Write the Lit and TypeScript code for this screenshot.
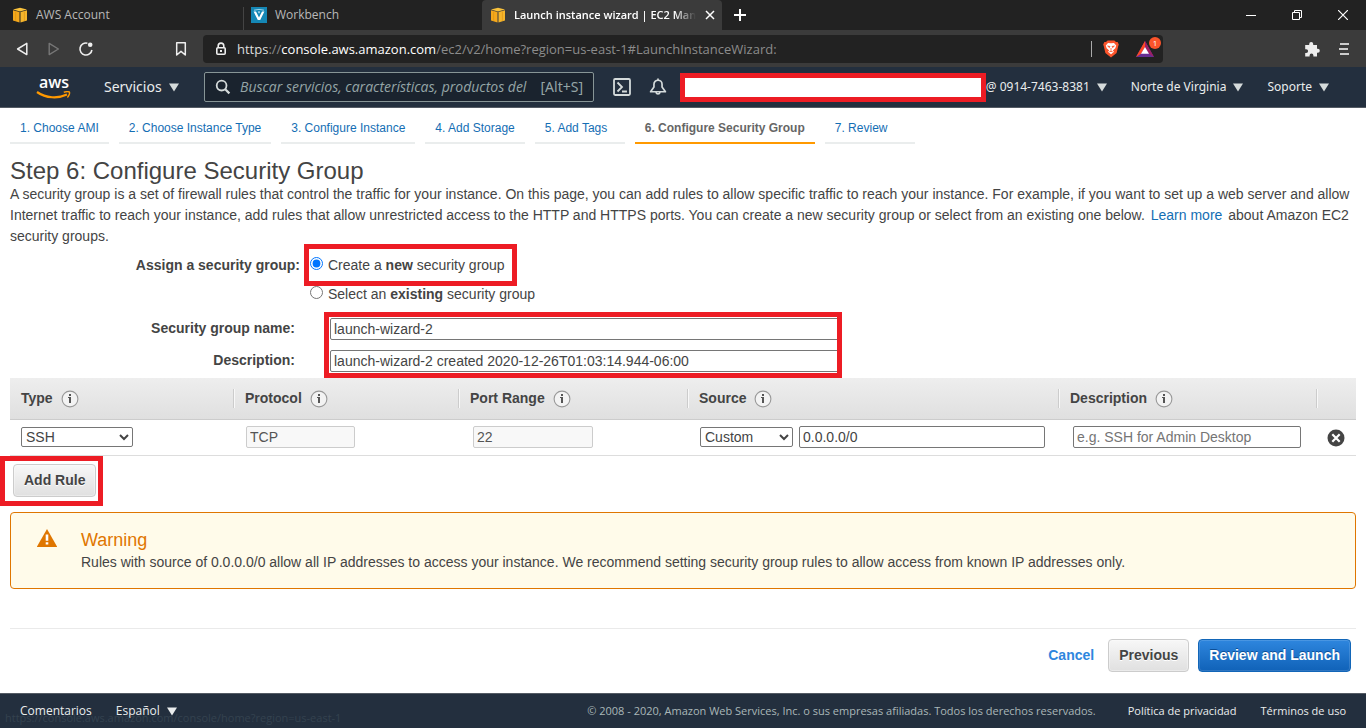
import { LitElement, html, css } from "lit";
import { customElement, state } from "lit/decorators.js";

const cube = html`<svg class="fav" viewBox="0 0 16 16" width="16" height="16" aria-hidden="true">
  <path d="M1 2.6 8 0.8 15 2.6 8 4.4Z" fill="#f9c23c"/>
  <path d="M1 3.3 7.5 5V15.4L1 13.4Z" fill="#f5a81c"/>
  <path d="M15 3.3 8.5 5V15.4L15 13.4Z" fill="#f5b52c"/>
  <path d="M3.6 4.4v9.4M12.4 4.4v9.4" stroke="#d98e10" stroke-width=".6"/>
</svg>`;

const caret = html`<svg class="caret" viewBox="0 0 10 9" width="10" height="9" aria-hidden="true"><path d="M0 0.5H10L5 8.5Z" fill="currentColor"/></svg>`;

const info = html`<svg class="info" viewBox="0 0 18 18" width="18" height="18" aria-hidden="true">
  <circle cx="9" cy="9" r="7.9" fill="#f3f3f3" stroke="#999" stroke-width="1.1"/>
  <path d="M8 4h2v2H8zM7 7h3v6H8V8H7z" fill="#555"/>
</svg>`;

const steps = ["1. Choose AMI", "2. Choose Instance Type", "3. Configure Instance", "4. Add Storage", "5. Add Tags", "6. Configure Security Group", "7. Review"];

@customElement("browser-chrome")
export class BrowserChrome extends LitElement {
  static styles = css`
    :host { display: block; font: 12px/16px "Open Sans", "Noto Sans", sans-serif; color: #b8b8b8; background: #222; }
    button { all: unset; box-sizing: border-box; display: inline-flex; align-items: center; }
    .tabs { display: flex; height: 30px; }
    .tab { box-sizing: border-box; display: flex; align-items: center; gap: 8px; width: 240px; padding: 0 6px 0 12px; white-space: nowrap; }
    .tab.second { position: relative; padding-left: 11px; }
    .tab.second::before { content: ""; position: absolute; left: 3px; top: 7px; bottom: 0; width: 1px; background: #444; }
    .tab.active { margin-left: 2px; padding-left: 8px; background: #3b3b3b; color: #fff; font-size: 11px; font-weight: 600; border-radius: 4px 4px 0 0; }
    .fav { flex: none; }
    .title { flex: 1; }
    .active .title { mask-image: linear-gradient(to right, #000 88%, transparent); }
    .plus { padding: 0 11px; }
    .win { margin-left: auto; display: flex; gap: 36px; padding-right: 18px; align-items: center; }
    .bar { display: flex; align-items: center; height: 37px; background: #3b3b3b; }
    .navs { display: flex; align-items: center; box-sizing: border-box; width: 203px; padding: 0 14px; gap: 16px; }
    .mark { margin-left: auto; }
    .url { flex: 1; display: flex; align-items: center; height: 28px; background: #222; border-radius: 4px; padding-left: 12px; min-width: 0; }
    .addr { margin-left: 10px; flex: 1; font-size: 13px; line-height: 20px; white-space: nowrap; overflow: hidden; color: #8c8c8c; }
    .addr .hi { color: #fff; }
    .addr .mid { color: #ddd; }
    .sep { width: 1px; height: 16px; background: #aaa; margin-right: 11px; }
    .rewards { position: relative; margin-left: 17px; padding-right: 9px; }
    .badge { position: absolute; right: 2px; top: -4px; width: 12px; height: 12px; border-radius: 6px; background: #fb542b; color: #fff; font-size: 8px; line-height: 12px; text-align: center; }
    .right { box-sizing: border-box; display: flex; align-items: center; gap: 18px; padding-right: 16px; width: 203px; justify-content: flex-end; }
  `;

  render() {
    return html`
      <div class="tabs">
        <div class="tab">${cube}<span class="title">AWS Account</span></div>
        <div class="tab second">
          <svg class="fav" viewBox="0 0 16 16" width="16" height="16"><rect width="16" height="16" fill="#1587b5"/><path d="M2.6 4.6 6.8 13h2.4L13.4 4.6H11L8 10.6 5 4.6Z" fill="#fff"/><path d="M3 3.2Q8 1.6 13 3.2" stroke="#9bd3ea" fill="none"/><path d="M6.8 4.6h2.4L8 6.8Z" fill="#cdeaf5"/></svg>
          <span class="title">Workbench</span>
        </div>
        <div class="tab active">${cube}<span class="title">Launch instance wizard | EC2 Man</span>
          <button aria-label="Close tab"><svg viewBox="0 0 12 12" width="12" height="12"><path d="M2 2 10 10M10 2 2 10" stroke="#fff" stroke-width="1.5"/></svg></button>
        </div>
        <button class="plus" aria-label="New tab"><svg viewBox="0 0 14 14" width="14" height="14"><path d="M7 1V13M1 7H13" stroke="#fff" stroke-width="2"/></svg></button>
        <div class="win">
          <button aria-label="Minimize"><svg viewBox="0 0 10 10" width="10" height="10"><path d="M0 5.5H10" stroke="#fff"/></svg></button>
          <button aria-label="Restore"><svg viewBox="0 0 10 10" width="10" height="10"><path d="M.5 2.5h7v7h-7zM2.5 2V.5h7v7H8" fill="none" stroke="#fff"/></svg></button>
          <button aria-label="Close"><svg viewBox="0 0 10 10" width="10" height="10"><path d="M0 0 10 10M10 0 0 10" stroke="#fff" stroke-width="1.2"/></svg></button>
        </div>
      </div>
      <div class="bar">
        <div class="navs">
          <button aria-label="Back"><svg viewBox="0 0 16 16" width="16" height="16"><path d="M12.8 2.4V13.6L3.6 8Z" fill="none" stroke="#eee" stroke-width="1.5" stroke-linejoin="round"/></svg></button>
          <button aria-label="Forward"><svg viewBox="0 0 16 16" width="16" height="16"><path d="M3.2 2.4V13.6L12.4 8Z" fill="none" stroke="#777" stroke-width="1.4" stroke-linejoin="round"/></svg></button>
          <button aria-label="Reload"><svg viewBox="0 0 16 16" width="16" height="16"><path d="M9.4 2.2A6 6 0 1 0 13.9 9" fill="none" stroke="#eee" stroke-width="1.6"/><circle cx="12.2" cy="3.8" r="2.3" fill="#eee"/></svg></button>
          <button class="mark" aria-label="Bookmark"><svg viewBox="0 0 16 16" width="16" height="16"><path d="M3.7 1.7h8.6V14L8 10.4 3.7 14Z" fill="none" stroke="#eee" stroke-width="1.5" stroke-linejoin="round"/></svg></button>
        </div>
        <div class="url">
          <svg viewBox="0 0 12 14" width="12" height="14" aria-hidden="true"><path d="M3.2 5.5V3.9a2.8 2.8 0 0 1 5.6 0V5.5" fill="none" stroke="#eee" stroke-width="1.6"/><rect x="1.8" y="5.8" width="8.4" height="6.4" rx="1" fill="none" stroke="#eee" stroke-width="1.6"/><rect x="5" y="8" width="2" height="2" fill="#eee"/></svg>
          <div class="addr"><span class="mid">https</span>://<span class="hi">console.aws.amazon.com</span>/ec2/v2/home?region=us-east-1#LaunchInstanceWizard:</div>
          <div class="sep"></div>
          <button aria-label="Brave Shields"><svg viewBox="0 0 16 18" width="16" height="18"><path d="M4.6.4H11.4L13 2 14.6 2 15.8 4.6 15.2 6.2 13.6 13 8 17.6 2.4 13 .8 6.2 .2 4.6 1.4 2 3 2Z" fill="#fb542b"/><path d="M8 3.2 11 2.9 13.2 5.4 12.3 8.2 9.8 10.4 11 11.8 8 14.2 5 11.8 6.2 10.4 3.7 8.2 2.8 5.4 5 2.9Z" fill="#fff"/><path d="M4.6 6 7 6.5 6.4 7.6ZM11.4 6 9 6.5 9.6 7.6ZM8 8V10M6.4 11.8 8 10.8 9.6 11.8" fill="#fb542b" stroke="#fb542b" stroke-width=".8"/></svg></button>
          <button class="rewards" aria-label="Brave Rewards"><svg viewBox="0 0 18 16" width="18" height="16"><path d="M9 0 18 16H0Z" fill="#662d91"/><path d="M9 0 0 16 5 12.8 9 6Z" fill="#ff4724"/><path d="M9 0 18 16 13 12.8 9 6Z" fill="#9e1f63"/><path d="M9 6 13 12.8H5Z" fill="#fff"/></svg><span class="badge">1</span></button>
        </div>
        <div class="right">
          <button aria-label="Extensions"><svg viewBox="0 0 16 16" width="16" height="16"><path d="M1.2 4H5.2V3a2 2 0 0 1 4 0V4H13v3.8h.8a2 2 0 0 1 0 4H13v3.8H9.4V14.4a1.9 1.9 0 0 0-3.8 0v1.2H1.2V12h1a1.9 1.9 0 0 0 0-3.8h-1Z" fill="#eee"/></svg></button>
          <button aria-label="Menu"><svg viewBox="0 0 12 14" width="12" height="14"><path d="M2 2H11M1 7H10M2 12H11" stroke="#ccc" stroke-width="2"/></svg></button>
        </div>
      </div>`;
  }
}

@customElement("aws-nav")
export class AwsNav extends LitElement {
  static styles = css`
    :host { display: flex; align-items: center; height: 40px; background: #232f3e; border-bottom: 1px solid #545b64; color: #eaeded; font: 12px/20px "Noto Sans", "Open Sans", sans-serif; white-space: nowrap; }
    button { all: unset; box-sizing: border-box; display: inline-flex; align-items: center; gap: 7px; }
    .logo { display: flex; flex-direction: column; align-items: center; margin: 0 32px 0 36px; width: 36px; color: #fff; font: 600 16px/14px "Open Sans", sans-serif; }
    .logo svg { margin-top: 2px; }
    .services { width: 100px; font-size: 14px; }
    .caret { flex: none; color: #d5dbdb; }
    .search { box-sizing: border-box; display: flex; align-items: center; width: 390px; height: 30px; border: 1px solid #879596; border-radius: 2px; background: #1a232e; padding: 0 10px; color: #95a5a6; font-size: 14px; }
    .search input { flex: 1; min-width: 0; border: 0; outline: 0; padding: 0; margin: 0 4px 0 9px; background: none; color: #eaeded; font: italic 14px/20px "Open Sans", sans-serif; }
    .search input::placeholder { color: #95a5a6; }
    .icons { display: flex; gap: 18px; padding: 0 13px 0 19px; }
    .redacted { box-sizing: border-box; flex: 1; height: 29px; background: #fff; border: 5px solid #ed1c24; }
    .menus { display: flex; gap: 24px; padding-right: 37px; }
  `;

  render() {
    return html`
      <a class="logo"><span>aws</span><svg viewBox="0 0 36 8" width="36" height="8" aria-hidden="true"><path d="M1 1C10 7.4 22 7.8 31 3.6" fill="none" stroke="#f90" stroke-width="2.2"/><path d="M27.8 1.2C30 .6 32.6 .6 33.4 1 34 2 33 5 31.4 6.6" fill="none" stroke="#f90" stroke-width="1.4"/></svg></a>
      <button class="services">Servicios ${caret}</button>
      <label class="search">
        <svg viewBox="0 0 16 16" width="16" height="16" aria-hidden="true"><circle cx="6.6" cy="6.6" r="4.9" fill="none" stroke="#d5dbdb" stroke-width="1.8"/><path d="M10.2 10.2 14.4 14.4" stroke="#d5dbdb" stroke-width="2.2"/></svg>
        <input type="text" aria-label="Buscar" placeholder="Buscar servicios, características, productos del">
        <span>[Alt+S]</span>
      </label>
      <div class="icons">
        <button aria-label="CloudShell"><svg viewBox="0 0 16 16" width="18" height="18"><rect x=".9" y=".9" width="14.2" height="14.2" rx="1" fill="none" stroke="#d5dbdb" stroke-width="1.6"/><path d="M4 4 8 8 4 12M8 12H12.4" fill="none" stroke="#d5dbdb" stroke-width="1.6"/></svg></button>
        <button aria-label="Notificaciones"><svg viewBox="0 0 16 16" width="18" height="18"><path d="M8 2A3.6 3.6 0 0 0 4.4 5.6V8L1.4 12.2H14.6L11.6 8V5.6A3.6 3.6 0 0 0 8 2ZM8 .4V2M6.2 12.8A1.9 1.9 0 0 0 9.8 12.8" fill="none" stroke="#d5dbdb" stroke-width="1.5" stroke-linejoin="round"/></svg></button>
      </div>
      <div class="redacted"></div>
      <div class="menus">
        <button>@ 0914-7463-8381 ${caret}</button>
        <button>Norte de Virginia ${caret}</button>
        <button>Soporte ${caret}</button>
      </div>`;
  }
}

@customElement("app-root")
export class AppRoot extends LitElement {
  @state() private mode = "new";

  static styles = css`
    :host { display: flex; flex-direction: column; min-height: 100vh; background: #fff; color: #444; font: 14px/21px "Liberation Sans", Arial, sans-serif; }
    a { color: #146eb4; text-decoration: none; }
    input, select { box-sizing: border-box; margin: 0; font: 14px/18px "Liberation Sans", Arial, sans-serif; color: #444; }
    input[type="text"] { height: 22px; padding: 1px 3px; border: 1px solid #767676; border-radius: 2px; background: #fff; }
    input[type="text"]:disabled { border-color: #ccc; background: #f8f8f8; color: #545454; }
    input::placeholder { color: #757575; }
    select { height: 20px; padding: 0; border: 1px solid #767676; border-radius: 2px; background-color: #fff; }
    .steps { display: flex; gap: 10px; padding: 0 10px; font-size: 12px; line-height: 14px; }
    .step { box-sizing: border-box; height: 36px; min-width: 90px; padding: 13px 10px 0; border-bottom: 2px solid #eaeded; }
    .step.on { border-color: #f90; color: #666; font-weight: 700; }
    main { padding: 13px 10px 0; flex: 1; }
    h1 { margin: 0; font-size: 24px; line-height: 27px; font-weight: 400; }
    p { margin: 0; }
    p a { margin: 0 2px; }
    .mark { position: relative; }
    .mark::after { content: ""; position: absolute; border: 5px solid #ed1c24; pointer-events: none; }
    .choose::after { inset: -11px -12px -10px -6px; }
    .fields::after { inset: -6px -2px -6px -6px; }
    .add::after { inset: -8px -7px -9px -13px; }
    .form { display: grid; grid-template-columns: 290px auto; justify-content: start; padding-top: 8px; }
    .lbl { font-weight: 700; text-align: right; }
    .radios { display: flex; flex-direction: column; align-items: flex-start; gap: 8px; padding-left: 10px; }
    .radios label { display: flex; align-items: center; gap: 5px; white-space: pre; }
    .radios input { width: 13px; height: 13px; margin-bottom: 4px; }
    .names { display: flex; flex-direction: column; gap: 11px; padding: 13px 5px 0 0; }
    .fields { display: flex; flex-direction: column; gap: 10px; width: 510px; margin: 13px 0 6px 30px; }
    table { width: 100%; table-layout: fixed; border-collapse: collapse; }
    .c-type { width: 223px; } .c-proto { width: 225px; } .c-port { width: 229px; } .c-desc { width: 258px; } .c-del { width: 40px; }
    th { height: 41px; padding: 0; text-align: left; border-bottom: 1px solid #ccc; }
    thead { background: linear-gradient(#eee, #dfdfdf); }
    .head { display: flex; align-items: center; gap: 8px; height: 19px; padding-left: 11px; border-left: 1px solid #ccc; box-shadow: inset 1px 0 #f8f8f8; }
    .head.first { border: 0; box-shadow: none; }
    td { height: 33px; padding: 0 13px 2px; border-bottom: 1px solid #ddd; }
    td:first-child { padding-left: 11px; }
    .cell { display: flex; align-items: center; gap: 6px; }
    .cell.in { padding: 0 2px; }
    .s-type { width: 112px; } .s-src { width: 93px; } .i-proto { width: 109px; } .i-port { width: 120px; } .grow { flex: 1; min-width: 0; }
    .btn { box-sizing: border-box; height: 33px; padding: 0 10px; font: 700 14px/21px "Liberation Sans", Arial, sans-serif; color: #444; background: linear-gradient(#f7f7f7, #e0e0e0); border: 1px solid #ccc; border-radius: 4px; box-shadow: inset 0 0 0 1px #ffffff55; text-shadow: 0 1px #fff; }
    .btn.primary { color: #fff; background: linear-gradient(#2e86de, #1062b8); border-color: #1266b8; text-shadow: 0 -1px #0d4f96; box-shadow: inset 0 0 0 1px #ffffff22; }
    .add { display: flex; width: max-content; margin: 8px 0 0 3px; }
    .del { all: unset; display: flex; margin: 2px 0 0 -2px; }
    .warn { display: flex; gap: 24px; margin-top: 15px; padding: 16px 26px 15px; border: 1px solid #df7600; border-radius: 4px; background: #fffbea; }
    .warn h2 { margin: 0; font-size: 18px; line-height: 23px; font-weight: 400; color: #df7600; }
    .actions { display: flex; justify-content: flex-end; align-items: center; gap: 9px; margin-top: 39px; padding: 10px 5px 21px; border-top: 1px solid #eaeaea; }
    .cancel { font-weight: 700; color: #2e86de; margin-right: 5px; }
    footer { position: relative; display: flex; align-items: center; gap: 24px; height: 34px; padding: 0 20px; background: #232f3e; border-top: 1px solid #545b64; color: #eaeded; font: 11px/20px "Open Sans", "Noto Sans", sans-serif; white-space: nowrap; }
    footer a { color: #eaeded; }
    footer button { all: unset; display: flex; align-items: center; gap: 7px; }
    .lang { display: flex; gap: 24px; font-size: 12px; }
    .copy { margin-left: auto; margin-right: 8px; color: #aab7b8; }
    .status { position: absolute; left: 5px; bottom: 2px; color: #34424f; line-height: 16px; }
  `;

  private headCell(label: string, first = false) {
    return html`<th scope="col"><div class="head ${first ? "first" : ""}">${label} ${label ? info : ""}</div></th>`;
  }

  render() {
    return html`
      <browser-chrome></browser-chrome>
      <aws-nav></aws-nav>
      <nav class="steps">
        ${steps.map((s, i) => i === 5 ? html`<span class="step on">${s}</span>` : html`<a class="step" href="#">${s}</a>`)}
      </nav>
      <main>
        <h1>Step 6: Configure Security Group</h1>
        <p>A security group is a set of firewall rules that control the traffic for your instance. On this page, you can add rules to allow specific traffic to reach your instance. For example, if you want to set up a web server and allow Internet traffic to reach your instance, add rules that allow unrestricted access to the HTTP and HTTPS ports. You can create a new security group or select from an existing one below. <a href="#">Learn more</a> about Amazon EC2 security groups.</p>
        <div class="form">
          <div class="lbl" id="assign">Assign a security group:</div>
          <div class="radios" role="radiogroup" aria-labelledby="assign">
            <label class="mark choose"><input type="radio" name="sg" .checked=${this.mode === "new"} @change=${() => (this.mode = "new")}><span>Create a <b>new</b> security group</span></label>
            <label><input type="radio" name="sg" .checked=${this.mode === "existing"} @change=${() => (this.mode = "existing")}><span>Select an <b>existing</b> security group</span></label>
          </div>
          <div class="names">
            <label class="lbl" for="name">Security group name:</label>
            <label class="lbl" for="desc">Description:</label>
          </div>
          <div class="fields mark">
            <input id="name" type="text" value="launch-wizard-2">
            <input id="desc" type="text" value="launch-wizard-2 created 2020-12-26T01:03:14.944-06:00">
          </div>
        </div>
        <table>
          <colgroup><col class="c-type"><col class="c-proto"><col class="c-port"><col><col class="c-desc"><col class="c-del"></colgroup>
          <thead><tr>${this.headCell("Type", true)}${this.headCell("Protocol")}${this.headCell("Port Range")}${this.headCell("Source")}${this.headCell("Description")}${this.headCell("")}</tr></thead>
          <tbody><tr>
            <td><div class="cell"><select class="s-type" aria-label="Type"><option>SSH</option></select></div></td>
            <td><div class="cell"><input class="i-proto" type="text" aria-label="Protocol" value="TCP" disabled></div></td>
            <td><div class="cell in"><input class="i-port" type="text" aria-label="Port Range" value="22" disabled></div></td>
            <td><div class="cell"><select class="s-src" aria-label="Source"><option>Custom</option></select><input class="grow" type="text" aria-label="Source address" value="0.0.0.0/0"></div></td>
            <td><div class="cell in"><input class="grow" type="text" aria-label="Description" placeholder="e.g. SSH for Admin Desktop"></div></td>
            <td><button class="del" aria-label="Delete rule"><svg viewBox="0 0 18 18" width="18" height="18"><circle cx="9" cy="9" r="8.5" fill="#444"/><path d="M5.3 5.3 12.7 12.7M12.7 5.3 5.3 12.7" stroke="#fff" stroke-width="2.2"/></svg></button></td>
          </tr></tbody>
        </table>
        <div class="mark add"><button class="btn">Add Rule</button></div>
        <section class="warn">
          <svg viewBox="0 0 20 20" width="20" height="20" aria-hidden="true"><path d="M10 0 20 17.5V18H0V17.5Z" fill="#df7600"/><path d="M8.7 5.5h2.6v6.2H8.7zM8.7 13.2h2.6v2.4H8.7z" fill="#fff"/></svg>
          <div><h2>Warning</h2><p>Rules with source of 0.0.0.0/0 allow all IP addresses to access your instance. We recommend setting security group rules to allow access from known IP addresses only.</p></div>
        </section>
        <div class="actions">
          <a class="cancel" href="#">Cancel</a>
          <button class="btn">Previous</button>
          <button class="btn primary">Review and Launch</button>
        </div>
      </main>
      <footer>
        <div class="status">https://console.aws.amazon.com/console/home?region=us-east-1</div>
        <div class="lang">
          <a href="#">Comentarios</a>
          <button>Español ${caret}</button>
        </div>
        <span class="copy">© 2008 - 2020, Amazon Web Services, Inc. o sus empresas afiliadas. Todos los derechos reservados.</span>
        <a href="#">Política de privacidad</a>
        <a href="#">Términos de uso</a>
      </footer>`;
  }
}
